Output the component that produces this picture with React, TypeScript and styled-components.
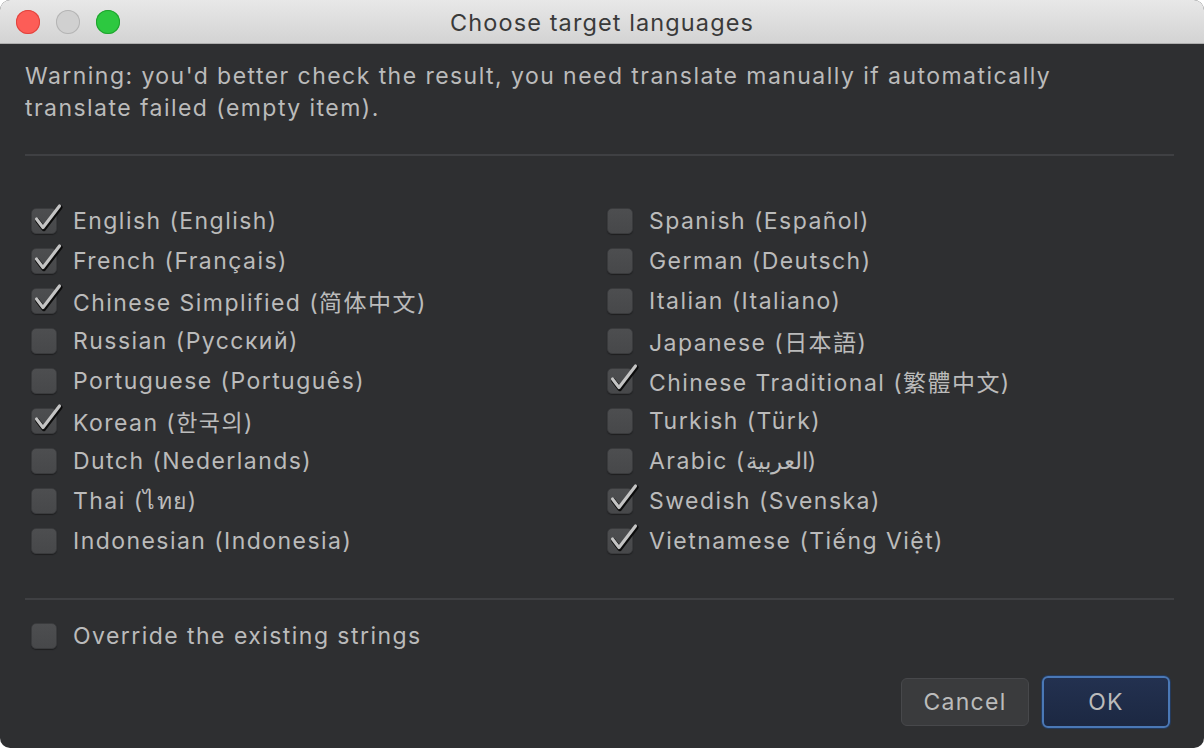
import React from "react";
import styled, { createGlobalStyle } from "styled-components";

const Global = createGlobalStyle`
  html, body { margin: 0; padding: 0; background: #ffffff; }
  body { font-family: Inter, "Noto Sans", "Noto Sans CJK SC", sans-serif; }
  #root { width: 1204px; height: 748px; }
`;

const Window = styled.div`
  width: 1204px;
  height: 748px;
  display: flex;
  flex-direction: column;
  border-radius: 10px;
  overflow: hidden;
  background: #2e2f31;
  box-sizing: border-box;
`;

const TitleBar = styled.div`
  height: 43px;
  flex: none;
  position: relative;
  display: flex;
  align-items: center;
  justify-content: center;
  background: linear-gradient(#e8e8e8, #d3d3d3);
  border-bottom: 1px solid #aeaeae;
`;

const Lights = styled.div`
  position: absolute;
  left: 16px;
  top: 10px;
  display: flex;
  gap: 16px;
`;

const Light = styled.span<{ $c: string; $b: string }>`
  width: 24px;
  height: 24px;
  border-radius: 50%;
  background: ${(p) => p.$c};
  box-shadow: inset 0 0 0 1px ${(p) => p.$b};
`;

const Title = styled.div`
  font-size: 23.5px;
  color: #3a3a3a;
  letter-spacing: 1.1px;
  padding-top: 2px;
`;

const Body = styled.div`
  flex: 1;
  display: flex;
  flex-direction: column;
  padding: 16px 30px 0 25px;
  color: #bbbbbb;
  font-size: 23px;
  letter-spacing: 1.45px;
`;

const Warning = styled.div`
  line-height: 32px;
  white-space: nowrap;
`;

const Divider = styled.div<{ $top: number; $bottom: number }>`
  height: 2px;
  background: #3f4043;
  margin-top: ${(p) => p.$top}px;
  margin-bottom: ${(p) => p.$bottom}px;
`;

const Grid = styled.div`
  display: grid;
  grid-template-columns: 576px 1fr;
  grid-auto-rows: 40px;
  padding: 0 0 0 6px;
`;

const Row = styled.label`
  display: flex;
  align-items: center;
  gap: 16px;
  height: 40px;
  white-space: nowrap;
  padding-top: 1px;
  box-sizing: border-box;
`;

const Box = styled.span`
  position: relative;
  width: 26px;
  height: 26px;
  flex: none;
  border-radius: 5px;
  background: linear-gradient(#4d4e50, #47484a);
  border: 1px solid #3a3b3d;
  box-sizing: border-box;
  box-shadow: 0 1px 1px #1e1f20;
`;

const Check = styled.svg`
  position: absolute;
  left: 2px;
  top: -7px;
  overflow: visible;
`;

function CheckBox({ checked }: { checked: boolean }) {
  return (
    <Box>
      {checked && (
        <Check width="28" height="30" viewBox="0 0 28 30">
          <path d="M2.5 17 L9 25.5 L25.5 4" fill="none" stroke="#0c0c0c" strokeWidth="4.6" strokeLinecap="round" strokeLinejoin="round" transform="translate(0.8,1.4)" />
          <path d="M2.5 17 L9 25.5 L25.5 4" fill="none" stroke="#c4c4c4" strokeWidth="3.1" strokeLinecap="round" strokeLinejoin="round" />
        </Check>
      )}
    </Box>
  );
}

const Footer = styled.div`
  display: flex;
  justify-content: flex-end;
  align-items: center;
  gap: 13px;
  padding-right: 4px;
  margin-top: 21px;
`;

const Button = styled.button<{ $primary?: boolean }>`
  width: 128px;
  height: ${(p) => (p.$primary ? "52px" : "48px")};
  border-radius: 6px;
  font-family: Inter, sans-serif;
  font-size: 23px;
  letter-spacing: 1.3px;
  color: #bbbbbb;
  background: ${(p) => (p.$primary ? "linear-gradient(#233150, #1c2842)" : "#3a3b3d")};
  border: ${(p) => (p.$primary ? "2px solid #4a78b6" : "1px solid #47484b")};
  box-shadow: ${(p) => (p.$primary ? "0 0 0 1px #243a5c" : "none")};
  padding: 0;
`;

const left: [string, boolean][] = [
  ["English (English)", true],
  ["French (Français)", true],
  ["Chinese Simplified (简体中文)", true],
  ["Russian (Русский)", false],
  ["Portuguese (Português)", false],
  ["Korean (한국의)", true],
  ["Dutch (Nederlands)", false],
  ["Thai (ไทย)", false],
  ["Indonesian (Indonesia)", false],
];
const right: [string, boolean][] = [
  ["Spanish (Español)", false],
  ["German (Deutsch)", false],
  ["Italian (Italiano)", false],
  ["Japanese (日本語)", false],
  ["Chinese Traditional (繁體中文)", true],
  ["Turkish (Türk)", false],
  ["Arabic (العربية)", false],
  ["Swedish (Svenska)", true],
  ["Vietnamese (Tiếng Việt)", true],
];

export default function App() {
  const items: [string, boolean][] = [];
  for (let i = 0; i < left.length; i++) {
    items.push(left[i]);
    items.push(right[i]);
  }
  return (
    <>
      <Global />
      <Window>
        <TitleBar>
          <Lights>
            <Light $c="#fd5d57" $b="#e0443e" />
            <Light $c="#d0d0d0" $b="#b4b4b4" />
            <Light $c="#2dc840" $b="#20a22f" />
          </Lights>
          <Title>Choose target languages</Title>
        </TitleBar>
        <Body>
          <Warning>
            Warning: you'd better check the result, you need translate manually if automatically
            <br />
            translate failed (empty item).
          </Warning>
          <Divider $top={30} $bottom={44} />
          <Grid>
            {items.map(([t, c]) => (
              <Row key={t}>
                <CheckBox checked={c} />
                <span>{t}</span>
              </Row>
            ))}
          </Grid>
          <Divider $top={38} $bottom={15} />
          <Grid>
            <Row>
              <CheckBox checked={false} />
              <span>Override the existing strings</span>
            </Row>
          </Grid>
          <Footer>
            <Button>Cancel</Button>
            <Button $primary>OK</Button>
          </Footer>
        </Body>
      </Window>
    </>
  );
}
